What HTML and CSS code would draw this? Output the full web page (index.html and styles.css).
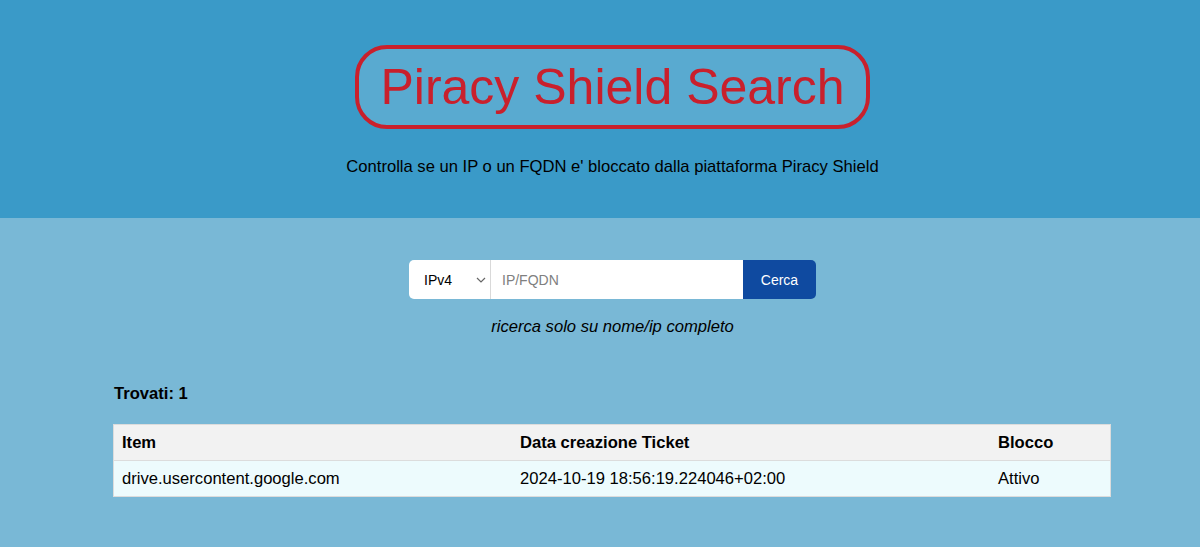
FILE: index.html
```html
<!DOCTYPE html>
<html lang="it">
<head>
<meta charset="utf-8">
<title>Piracy Shield Search</title>
<link rel="stylesheet" href="styles.css">
</head>
<body>
<header class="top">
  <h1 class="title">Piracy Shield Search</h1>
  <p class="subtitle">Controlla se un IP o un FQDN e' bloccato dalla piattaforma Piracy Shield</p>
</header>
<main class="content">
  <form class="search" onsubmit="return false">
    <div class="select-wrap">
      <select class="type">
        <option>IPv4</option>
        <option>IPv6</option>
        <option>FQDN</option>
      </select>
      <svg class="chev" width="10" height="6" viewBox="0 0 10 6"><path d="M1 1 L5 5 L9 1" fill="none" stroke="#666" stroke-width="1.2"/></svg>
    </div>
    <input class="query" type="text" placeholder="IP/FQDN">
    <button class="go" type="submit">Cerca</button>
  </form>
  <p class="hint">ricerca solo su nome/ip completo</p>
  <div class="results">
    <p class="count">Trovati: 1</p>
    <table class="tbl">
      <thead>
        <tr><th class="c1">Item</th><th class="c2">Data creazione Ticket</th><th class="c3">Blocco</th></tr>
      </thead>
      <tbody>
        <tr><td>drive.usercontent.google.com</td><td>2024-10-19 18:56:19.224046+02:00</td><td>Attivo</td></tr>
      </tbody>
    </table>
  </div>
</main>
</body>
</html>
```
FILE: styles.css
```css
html, body {
  margin: 0;
  padding: 0;
}
body {
  font-family: "Liberation Sans", Arial, Helvetica, sans-serif;
  background: #79b8d6;
  color: #000;
  height: 547px;
}
.top {
  background: #3a9ac8;
  height: 218px;
  box-sizing: border-box;
  padding: 45px 0 0 25px;
  text-align: center;
}
.title {
  display: inline-block;
  margin: 0;
  font-size: 50px;
  font-weight: normal;
  line-height: 58px;
  color: #c9202c;
  border: 4px solid #c9202c;
  border-radius: 32px;
  padding: 9px 21px;
  background: rgba(255, 255, 255, 0.16);
}
.subtitle {
  margin: 28px 0 0;
  font-size: 16.6px;
  line-height: 19px;
}
.content {
  padding: 42px 0 0 25px;
}
.search {
  display: flex;
  justify-content: center;
  height: 39px;
}
.select-wrap {
  position: relative;
  width: 82px;
  height: 39px;
}
.type {
  appearance: none;
  -webkit-appearance: none;
  width: 82px;
  height: 39px;
  margin: 0;
  border: 0;
  border-right: 1px solid #d9d9d9;
  border-radius: 5px 0 0 5px;
  background: #fff;
  padding: 0 0 0 15px;
  font-family: "Liberation Sans", Arial, sans-serif;
  font-size: 14px;
  color: #000;
  outline: none;
}
.chev {
  position: absolute;
  right: 5px;
  top: 17px;
  pointer-events: none;
}
.query {
  width: 252px;
  height: 39px;
  box-sizing: border-box;
  margin: 0;
  border: 0;
  padding: 0 11px;
  font-family: "Liberation Sans", Arial, sans-serif;
  font-size: 14px;
  background: #fff;
  outline: none;
}
.query::placeholder {
  color: #808080;
}
.go {
  width: 73px;
  height: 39px;
  margin: 0;
  border: 0;
  border-radius: 0 5px 5px 0;
  background: #0f4aa0;
  color: #fff;
  font-family: "Liberation Sans", Arial, sans-serif;
  font-size: 14px;
}
.hint {
  margin: 18px 0 0;
  text-align: center;
  font-style: italic;
  font-size: 16.6px;
  line-height: 19px;
}
.results {
  width: 998px;
  margin: 0 0 0 88px;
}
.count {
  margin: 48px 0 0 1px;
  font-weight: bold;
  font-size: 16.6px;
  line-height: 19px;
}
.tbl {
  margin-top: 21px;
  width: 998px;
  border-collapse: collapse;
  table-layout: fixed;
  font-size: 16.6px;
}
.tbl th, .tbl td {
  text-align: left;
  padding: 8px;
  line-height: 19px;
}
.tbl th {
  background: #f2f2f2;
  font-weight: bold;
}
.tbl td {
  background: #edfbfd;
}
.tbl tr {
  border: 1px solid #dcdcdc;
}
.c1 { width: 382px; }
.c2 { width: 462px; }
.c3 { width: auto; }
```
